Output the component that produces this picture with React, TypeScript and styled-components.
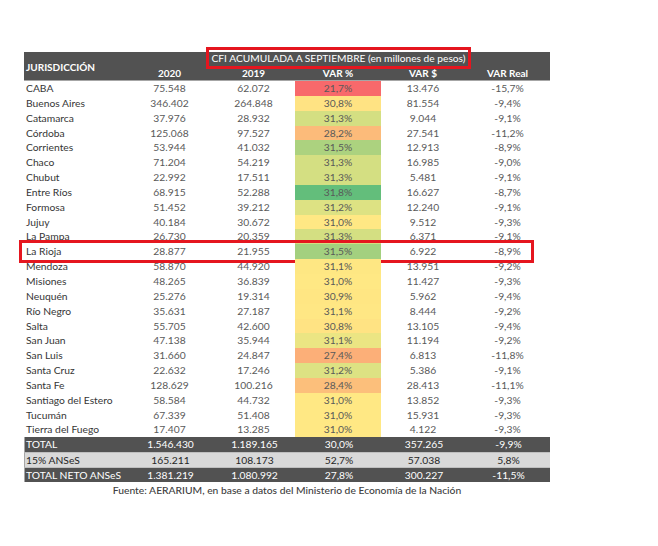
import styled, { createGlobalStyle } from 'styled-components';

const GlobalStyle = createGlobalStyle`
  html, body {
    margin: 0;
    padding: 0;
    background: #ffffff;
  }
  body {
    font-family: 'Lato', 'Liberation Sans', sans-serif;
  }
`;

const COLS = '103px 85px 83px 86px 84px 85px';
const ROW_H = '14.85px';

const Page = styled.div`
  width: 658px;
  height: 546px;
  box-sizing: border-box;
  padding: 52px 0 0 24px;
`;

const Sheet = styled.div`
  width: 526px;
  font-size: 10.3px;
`;

const Header = styled.div`
  display: grid;
  grid-template-columns: ${COLS};
  grid-template-rows: 14px 14px;
  background: #525252;
  color: #ffffff;
  border-bottom: 1px solid #a6a6a6;
`;

const HeadLabel = styled.div<{ $left?: boolean }>`
  grid-row: 2;
  display: flex;
  align-items: center;
  justify-content: ${(p) => (p.$left ? 'flex-start' : 'center')};
  padding-left: ${(p) => (p.$left ? '2px' : '0')};
  font-size: 10px;
  font-weight: 700;
  line-height: 14px;
  white-space: nowrap;
`;

const Jurisdiction = styled(HeadLabel)`
  grid-row: 1 / span 2;
  grid-column: 1;
  padding-top: 1px;
`;

const TitleCell = styled.div`
  grid-row: 1;
  grid-column: 2 / span 5;
  display: flex;
  align-items: center;
  justify-content: center;
`;

const TitleMark = styled.span`
  display: inline-block;
  font-size: 10.2px;
  line-height: 14px;
  padding: 1px 3px;
  margin: -5px 0 -3px;
  border: 3px solid #e5161f;
  white-space: nowrap;
`;

const Row = styled.div<{ $highlight?: boolean }>`
  position: relative;
  display: grid;
  grid-template-columns: ${COLS};
  height: ${ROW_H};
  line-height: ${ROW_H};

  ${(p) =>
    p.$highlight &&
    `
    &::after {
      content: '';
      position: absolute;
      left: -5px;
      right: 16px;
      top: -4px;
      bottom: -4px;
      border: 3px solid #e5161f;
      pointer-events: none;
    }
  `}
`;

const Name = styled.div`
  padding-left: 2px;
  color: #363636;
  white-space: nowrap;
`;

const Num = styled.div<{ $bg?: string }>`
  text-align: center;
  color: #595959;
  background: ${(p) => p.$bg || 'transparent'};
  white-space: nowrap;
`;

const SummaryRow = styled.div<{ $light?: boolean }>`
  display: grid;
  grid-template-columns: ${COLS};
  height: ${ROW_H};
  line-height: 14px;
  box-sizing: border-box;
  background: ${(p) => (p.$light ? '#d9d9d9' : '#525252')};
  color: ${(p) => (p.$light ? '#262626' : '#ffffff')};
  border-left: 1px solid #a6a6a6;

  & + & {
    border-top: 1px solid #bfbfbf;
  }
`;

const SumLabel = styled.div`
  padding-left: 1px;
  white-space: nowrap;
`;

const SumNum = styled.div`
  text-align: center;
  white-space: nowrap;
`;

const Source = styled.div`
  text-align: center;
  color: #404040;
  font-size: 10.3px;
  line-height: 14px;
  margin-top: 1px;
  font-weight: 500;
`;

type Province = [string, string, string, string, string, string, string];

const provinces: Province[] = [
  ['CABA', '75.548', '62.072', '21,7%', '13.476', '-15,7%', '#f8696b'],
  ['Buenos Aires', '346.402', '264.848', '30,8%', '81.554', '-9,4%', '#ffe383'],
  ['Catamarca', '37.976', '28.932', '31,3%', '9.044', '-9,1%', '#d4df82'],
  ['Córdoba', '125.068', '97.527', '28,2%', '27.541', '-11,2%', '#fcbb7a'],
  ['Corrientes', '53.944', '41.032', '31,5%', '12.913', '-8,9%', '#acd27f'],
  ['Chaco', '71.204', '54.219', '31,3%', '16.985', '-9,0%', '#d4df82'],
  ['Chubut', '22.992', '17.511', '31,3%', '5.481', '-9,1%', '#d4df82'],
  ['Entre Ríos', '68.915', '52.288', '31,8%', '16.627', '-8,7%', '#63be7b'],
  ['Formosa', '51.452', '39.212', '31,2%', '12.240', '-9,1%', '#dde283'],
  ['Jujuy', '40.184', '30.672', '31,0%', '9.512', '-9,3%', '#ffe884'],
  ['La Pampa', '26.730', '20.359', '31,3%', '6.371', '-9,1%', '#d4df82'],
  ['La Rioja', '28.877', '21.955', '31,5%', '6.922', '-8,9%', '#a3d07f'],
  ['Mendoza', '58.870', '44.920', '31,1%', '13.951', '-9,2%', '#fee783'],
  ['Misiones', '48.265', '36.839', '31,0%', '11.427', '-9,3%', '#ffe884'],
  ['Neuquén', '25.276', '19.314', '30,9%', '5.962', '-9,4%', '#ffe683'],
  ['Río Negro', '35.631', '27.187', '31,1%', '8.444', '-9,2%', '#ffe784'],
  ['Salta', '55.705', '42.600', '30,8%', '13.105', '-9,4%', '#ffe383'],
  ['San Juan', '47.138', '35.944', '31,1%', '11.194', '-9,2%', '#ebe583'],
  ['San Luis', '31.660', '24.847', '27,4%', '6.813', '-11,8%', '#fcaf78'],
  ['Santa Cruz', '22.632', '17.246', '31,2%', '5.386', '-9,1%', '#dde283'],
  ['Santa Fe', '128.629', '100.216', '28,4%', '28.413', '-11,1%', '#fcbf7b'],
  ['Santiago del Estero', '58.584', '44.732', '31,0%', '13.852', '-9,3%', '#ffe884'],
  ['Tucumán', '67.339', '51.408', '31,0%', '15.931', '-9,3%', '#ffe884'],
  ['Tierra del Fuego', '17.407', '13.285', '31,0%', '4.122', '-9,3%', '#ffe884'],
];

const totals = [
  { label: 'TOTAL', values: ['1.546.430', '1.189.165', '30,0%', '357.265', '-9,9%'], light: false },
  { label: '15% ANSeS', values: ['165.211', '108.173', '52,7%', '57.038', '5,8%'], light: true },
  { label: 'TOTAL NETO ANSeS', values: ['1.381.219', '1.080.992', '27,8%', '300.227', '-11,5%'], light: false },
];

const columns = ['2020', '2019', 'VAR %', 'VAR $', 'VAR Real'];

export default function App() {
  return (
    <>
      <GlobalStyle />
      <Page>
        <Sheet>
          <Header>
            <Jurisdiction $left>JURISDICCIÓN</Jurisdiction>
            <TitleCell>
              <TitleMark>CFI ACUMULADA A SEPTIEMBRE (en millones de pesos)</TitleMark>
            </TitleCell>
            {columns.map((c) => (
              <HeadLabel key={c}>{c}</HeadLabel>
            ))}
          </Header>

          {provinces.map(([name, y2020, y2019, pct, diff, real, color]) => (
            <Row key={name} $highlight={name === 'La Rioja'}>
              <Name>{name}</Name>
              <Num>{y2020}</Num>
              <Num>{y2019}</Num>
              <Num $bg={color}>{pct}</Num>
              <Num>{diff}</Num>
              <Num>{real}</Num>
            </Row>
          ))}

          {totals.map((t) => (
            <SummaryRow key={t.label} $light={t.light}>
              <SumLabel>{t.label}</SumLabel>
              {t.values.map((v, i) => (
                <SumNum key={i}>{v}</SumNum>
              ))}
            </SummaryRow>
          ))}

          <Source>Fuente: AERARIUM, en base a datos del Ministerio de Economía de la Nación</Source>
        </Sheet>
      </Page>
    </>
  );
}
